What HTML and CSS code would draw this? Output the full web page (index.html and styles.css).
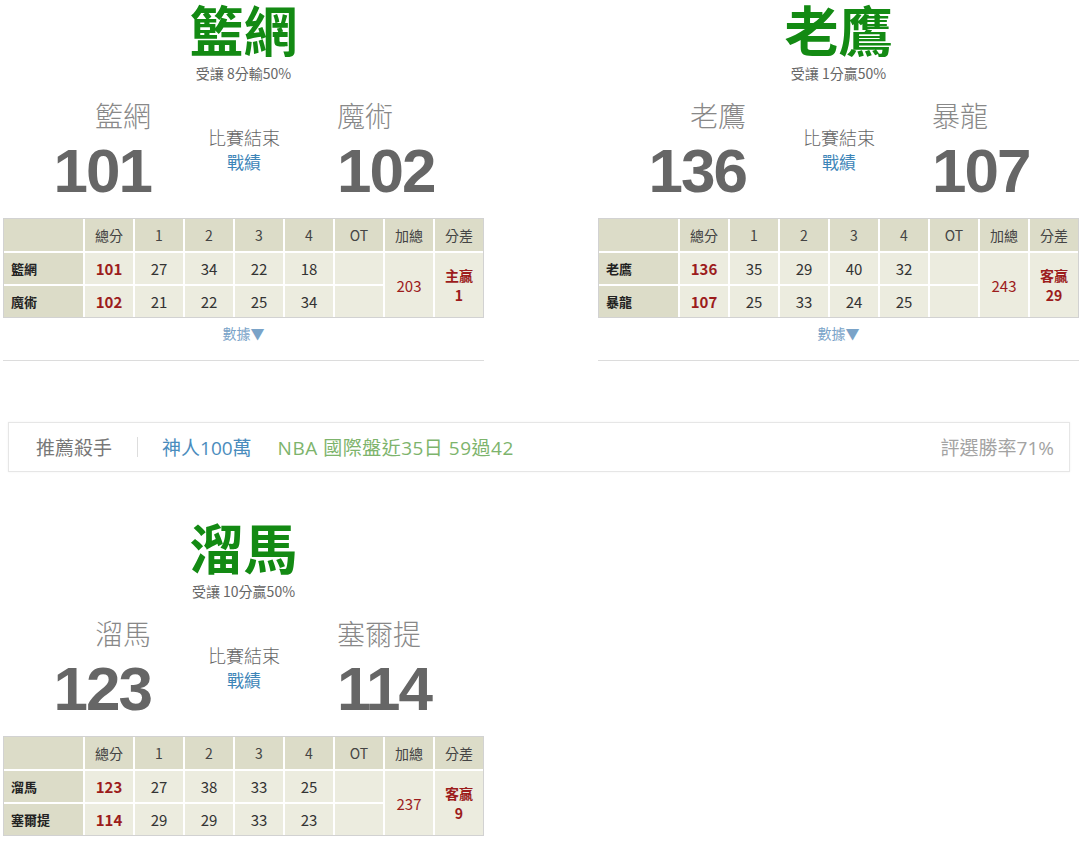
FILE: index.html
```html
<!DOCTYPE html>
<html lang="zh-Hant">
<head>
<meta charset="utf-8">
<title>NBA 賽果</title>
<link rel="stylesheet" href="styles.css">
</head>
<body>
<div class="page">
  <div class="games">
    <section class="game">
      <h2 class="pick">籃網</h2>
      <div class="spread">受讓 8分輸50%</div>
      <div class="teams">
        <div class="team home"><div class="name">籃網</div><div class="score">101</div></div>
        <div class="status"><div class="state">比賽結束</div><a class="record" href="#">戰績</a></div>
        <div class="team away"><div class="name">魔術</div><div class="score">102</div></div>
      </div>
      <table class="box">
        <colgroup><col class="c-team"><col span="8" class="c-num"></colgroup>
        <tr class="head"><th></th><th>總分</th><th>1</th><th>2</th><th>3</th><th>4</th><th>OT</th><th>加總</th><th>分差</th></tr>
        <tr><th class="tn">籃網</th><td class="tot">101</td><td>27</td><td>34</td><td>22</td><td>18</td><td></td><td class="sum" rowspan="2">203</td><td class="diff" rowspan="2">主贏<br>1</td></tr>
        <tr><th class="tn">魔術</th><td class="tot">102</td><td>21</td><td>22</td><td>25</td><td>34</td><td></td></tr>
      </table>
      <div class="more">數據▼</div>
      <div class="rule"></div>
    </section>
    <section class="game">
      <h2 class="pick">老鷹</h2>
      <div class="spread">受讓 1分贏50%</div>
      <div class="teams">
        <div class="team home"><div class="name">老鷹</div><div class="score">136</div></div>
        <div class="status"><div class="state">比賽結束</div><a class="record" href="#">戰績</a></div>
        <div class="team away"><div class="name">暴龍</div><div class="score">107</div></div>
      </div>
      <table class="box">
        <colgroup><col class="c-team"><col span="8" class="c-num"></colgroup>
        <tr class="head"><th></th><th>總分</th><th>1</th><th>2</th><th>3</th><th>4</th><th>OT</th><th>加總</th><th>分差</th></tr>
        <tr><th class="tn">老鷹</th><td class="tot">136</td><td>35</td><td>29</td><td>40</td><td>32</td><td></td><td class="sum" rowspan="2">243</td><td class="diff" rowspan="2">客贏<br>29</td></tr>
        <tr><th class="tn">暴龍</th><td class="tot">107</td><td>25</td><td>33</td><td>24</td><td>25</td><td></td></tr>
      </table>
      <div class="more">數據▼</div>
      <div class="rule"></div>
    </section>
  </div>

  <div class="banner">
    <span class="b-label">推薦殺手</span>
    <span class="b-sep"></span>
    <span class="b-name">神人100萬</span>
    <span class="b-stat">NBA 國際盤近35日 59過42</span>
    <span class="b-rate">評選勝率71%</span>
  </div>

  <div class="games games-2">
    <section class="game">
      <h2 class="pick">溜馬</h2>
      <div class="spread">受讓 10分贏50%</div>
      <div class="teams">
        <div class="team home"><div class="name">溜馬</div><div class="score">123</div></div>
        <div class="status"><div class="state">比賽結束</div><a class="record" href="#">戰績</a></div>
        <div class="team away"><div class="name">塞爾提</div><div class="score">114</div></div>
      </div>
      <table class="box">
        <colgroup><col class="c-team"><col span="8" class="c-num"></colgroup>
        <tr class="head"><th></th><th>總分</th><th>1</th><th>2</th><th>3</th><th>4</th><th>OT</th><th>加總</th><th>分差</th></tr>
        <tr><th class="tn">溜馬</th><td class="tot">123</td><td>27</td><td>38</td><td>33</td><td>25</td><td></td><td class="sum" rowspan="2">237</td><td class="diff" rowspan="2">客贏<br>9</td></tr>
        <tr><th class="tn">塞爾提</th><td class="tot">114</td><td>29</td><td>29</td><td>33</td><td>23</td><td></td></tr>
      </table>
      <div class="more">數據▼</div>
      <div class="rule"></div>
    </section>
  </div>
</div>
</body>
</html>
```

FILE: styles.css
```css
html, body {
  margin: 0;
  padding: 0;
  background: #fff;
}
body {
  font-family: "Noto Sans CJK TC", "Noto Sans", sans-serif;
  color: #333;
}
.page {
  padding-left: 3px;
}
.games {
  display: grid;
  grid-template-columns: 481px 481px;
  column-gap: 114px;
}
.games-2 {
  margin-top: 46px;
}
.game {
  width: 481px;
}
.pick {
  margin: 0;
  font-size: 54px;
  line-height: 58px;
  font-weight: 700;
  color: #138a13;
  text-align: center;
}
.spread {
  margin-top: 6px;
  font-size: 14px;
  line-height: 18px;
  color: #666;
  text-align: center;
}
.teams {
  display: grid;
  grid-template-columns: 148px 186px 1fr;
  margin-top: 16px;
}
.team .name {
  font-size: 28px;
  line-height: 34px;
  font-weight: 300;
  color: #888;
}
.team .score {
  font-family: "Liberation Sans", Arial, sans-serif;
  font-weight: 700;
  font-size: 62px;
  letter-spacing: -2px;
  line-height: 78px;
  color: #666;
}
.home { text-align: right; }
.away { text-align: left; }
.status {
  text-align: center;
  padding-top: 27px;
}
.state {
  font-size: 18px;
  line-height: 24px;
  font-weight: 300;
  color: #666;
}
.record {
  display: block;
  font-size: 17px;
  line-height: 26px;
  color: #3d85b8;
  text-decoration: none;
}
.box {
  margin-top: 8px;
  width: 481px;
  table-layout: fixed;
  border-collapse: separate;
  border-spacing: 0;
  border: 1px solid #d2d2d2;
  font-size: 15px;
  color: #333;
}
.c-team { width: 79px; }
.c-num { width: 50px; }
.box th, .box td {
  padding: 0;
  text-align: center;
  border-left: 2px solid #fff;
  border-top: 2px solid #fff;
  background: #ececdf;
  font-weight: 400;
  height: 33px;
  box-sizing: border-box;
}
.box tr.head th {
  border-top: 0;
  height: 32px;
  background: #dcdcc8;
  color: #444;
  font-size: 14px;
}
.box tr > :first-child {
  border-left: 0;
}
.box th.tn {
  background: #dcdcc8;
  text-align: left;
  padding-left: 7px;
  font-weight: 700;
  font-size: 13px;
  color: #222;
}
.box td.tot,
.box td.sum,
.box td.diff {
  color: #9c1c1c;
}
.box td.tot { font-weight: 700; }
.box td.diff {
  font-weight: 700;
  font-size: 14px;
  line-height: 20px;
}
.more {
  margin-top: 5px;
  text-align: center;
  font-size: 14px;
  line-height: 20px;
  color: #7aa3c8;
}
.rule {
  margin-top: 17px;
  height: 1px;
  background: #dcdcdc;
}
.banner {
  margin: 61px 0 0 5px;
  width: 1062px;
  height: 50px;
  box-sizing: border-box;
  border: 1px solid #e6e6e6;
  box-shadow: 0 0 2px rgba(0, 0, 0, 0.06);
  display: flex;
  align-items: center;
  padding: 0 15px 0 27px;
  font-size: 19px;
  font-family: "Open Sans", "Noto Sans CJK TC", sans-serif;
}
.b-label { color: #777; }
.b-sep {
  width: 1px;
  height: 20px;
  background: #dddddd;
  margin: 0 24px 0 25px;
}
.b-name { color: #4a8cbd; }
.b-stat {
  color: #7db46c;
  margin-left: 26px;
  letter-spacing: 0.5px;
}
.b-rate {
  margin-left: auto;
  color: #a3a3a3;
}
```
